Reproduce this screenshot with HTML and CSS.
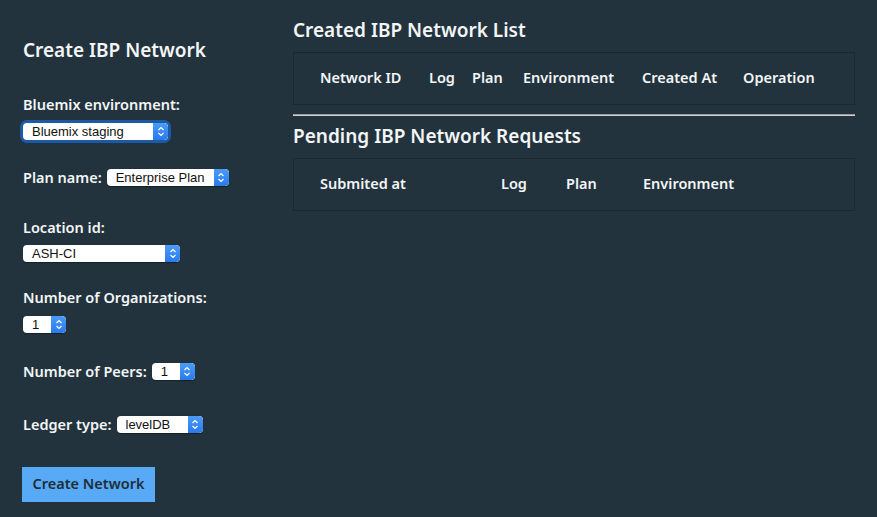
FILE: index.html
```html
<!DOCTYPE html>
<html>
<head>
<meta charset="utf-8">
<link rel="stylesheet" href="styles.css">
</head>
<body>
<div class="page">
  <aside class="form-col">
    <h2 class="form-title">Create IBP Network</h2>

    <div class="field field-env">
      <div class="label">Bluemix environment:</div>
      <div class="select focused w-env"><span class="sel-text">Bluemix staging</span><span class="sel-arrow"><svg width="8" height="11" viewBox="0 0 8 11"><path d="M1.5 4 L4 1.5 L6.5 4 M1.5 7 L4 9.5 L6.5 7" fill="none" stroke="#fff" stroke-width="1.2"/></svg></span></div>
    </div>

    <div class="field inline field-plan">
      <span class="label">Plan name:</span>
      <div class="select w-plan"><span class="sel-text">Enterprise Plan</span><span class="sel-arrow"><svg width="8" height="11" viewBox="0 0 8 11"><path d="M1.5 4 L4 1.5 L6.5 4 M1.5 7 L4 9.5 L6.5 7" fill="none" stroke="#fff" stroke-width="1.2"/></svg></span></div>
    </div>

    <div class="field field-loc">
      <div class="label">Location id:</div>
      <div class="select w-loc"><span class="sel-text">ASH-CI</span><span class="sel-arrow"><svg width="8" height="11" viewBox="0 0 8 11"><path d="M1.5 4 L4 1.5 L6.5 4 M1.5 7 L4 9.5 L6.5 7" fill="none" stroke="#fff" stroke-width="1.2"/></svg></span></div>
    </div>

    <div class="field field-org">
      <div class="label">Number of Organizations:</div>
      <div class="select w-num"><span class="sel-text">1</span><span class="sel-arrow"><svg width="8" height="11" viewBox="0 0 8 11"><path d="M1.5 4 L4 1.5 L6.5 4 M1.5 7 L4 9.5 L6.5 7" fill="none" stroke="#fff" stroke-width="1.2"/></svg></span></div>
    </div>

    <div class="field inline field-peers">
      <span class="label">Number of Peers:</span>
      <div class="select w-num"><span class="sel-text">1</span><span class="sel-arrow"><svg width="8" height="11" viewBox="0 0 8 11"><path d="M1.5 4 L4 1.5 L6.5 4 M1.5 7 L4 9.5 L6.5 7" fill="none" stroke="#fff" stroke-width="1.2"/></svg></span></div>
    </div>

    <div class="field inline field-ledger">
      <span class="label">Ledger type:</span>
      <div class="select w-ledger"><span class="sel-text">levelDB</span><span class="sel-arrow"><svg width="8" height="11" viewBox="0 0 8 11"><path d="M1.5 4 L4 1.5 L6.5 4 M1.5 7 L4 9.5 L6.5 7" fill="none" stroke="#fff" stroke-width="1.2"/></svg></span></div>
    </div>

    <button class="create-btn">Create Network</button>
  </aside>

  <main class="list-col">
    <h3 class="section-title">Created IBP Network List</h3>
    <div class="table-box">
      <div class="thead cols-created">
        <span>Network ID</span><span>Log</span><span>Plan</span><span>Environment</span><span>Created At</span><span>Operation</span>
      </div>
    </div>
    <hr class="divider">
    <h3 class="section-title">Pending IBP Network Requests</h3>
    <div class="table-box">
      <div class="thead cols-pending">
        <span>Submited at</span><span>Log</span><span>Plan</span><span>Environment</span>
      </div>
    </div>
  </main>
</div>
</body>
</html>
```

FILE: styles.css
```css
html, body {
  margin: 0;
  padding: 0;
  background: #22333d;
}

body {
  width: 877px;
  height: 517px;
  overflow: hidden;
  font-family: "Noto Sans", "Open Sans", sans-serif;
  color: #f3f5f6;
}

.page {
  display: flex;
  padding: 0 22px;
  gap: 21px;
}

.form-col {
  width: 249px;
  flex: none;
  padding-left: 1px;
}

.form-title {
  margin: 38px 0 0 0;
  font-size: 19px;
  line-height: 24px;
  font-weight: 600;
}

.label {
  font-size: 14.5px;
  line-height: 20px;
  font-weight: 600;
}

.field.inline {
  display: flex;
  align-items: center;
  gap: 5px;
  height: 20px;
}

.field-env { margin-top: 32px; }
.field-env .select { margin-top: 9px; }
.field-plan { margin-top: 27px; }
.field-loc { margin-top: 30px; }
.field-loc .select { margin-top: 8px; }
.field-org { margin-top: 25px; }
.field-org .select { margin-top: 9px; }
.field-peers { margin-top: 28px; }
.field-ledger { margin-top: 33px; }

.select {
  display: flex;
  align-items: stretch;
  height: 17px;
  background: #fff;
  border-radius: 4px;
  box-shadow: 0 0.5px 1px rgba(0,0,0,0.4);
  font-family: "Liberation Sans", Arial, sans-serif;
  font-size: 13px;
  color: #111;
  overflow: hidden;
}

.select.focused {
  box-shadow: 0 0 0 3px #1c5aa6;
}

.sel-text {
  flex: 1;
  padding-left: 9px;
  line-height: 17px;
  white-space: nowrap;
}

.sel-arrow {
  width: 15px;
  flex: none;
  display: flex;
  align-items: center;
  justify-content: center;
  background: linear-gradient(#4b9cf8, #2a79ee);
  border-radius: 0 4px 4px 0;
}

.w-env { width: 145px; }
.w-plan { width: 122px; }
.w-loc { width: 157px; }
.w-num { width: 43px; }
.w-ledger { width: 86px; }

.create-btn {
  display: block;
  margin-top: 33px;
  width: 133px;
  height: 35px;
  border: none;
  background: #59aaf6;
  color: #1d2e3a;
  font-family: "Noto Sans", "Open Sans", sans-serif;
  font-size: 14.5px;
  font-weight: 600;
  line-height: 20px;
  padding: 0 0 3px 0;
  margin-left: -1px;
}

.list-col {
  flex: 1;
}

.section-title {
  margin: 19px 0 0 0;
  font-size: 19px;
  line-height: 22px;
  font-weight: 600;
}

.table-box {
  margin-top: 11px;
  height: 51px;
  border: 1px solid #1a2832;
  display: flex;
  align-items: center;
}

.thead {
  display: grid;
  padding-left: 26px;
  font-size: 14.5px;
  font-weight: 600;
  line-height: 20px;
  margin-top: -3px;
}

.cols-created {
  grid-template-columns: 109px 43px 51px 119px 101px auto;
}

.cols-pending {
  grid-template-columns: 181px 65px 77px auto;
}

.divider {
  margin: 9px 0 0 0;
  border: none;
  border-top: 1px solid #9a9a9a;
  border-bottom: 1px solid #d0d0d0;
  height: 0;
}

.divider + .section-title {
  margin-top: 9px;
}
```
